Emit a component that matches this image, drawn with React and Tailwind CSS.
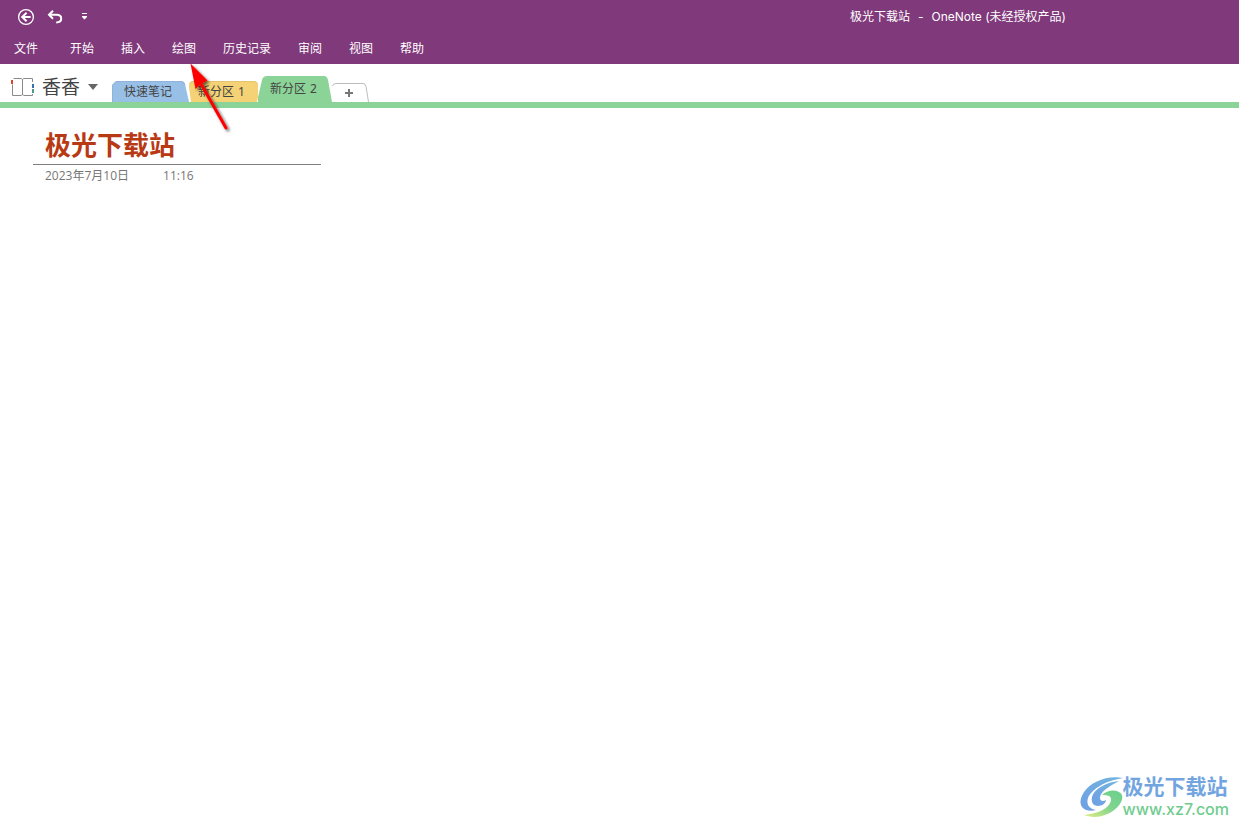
import React from "react";

const UI_FONT = "font-['Noto_Sans','Noto_Sans_CJK_SC',sans-serif]";

const MENU = ["开始", "插入", "绘图", "历史记录", "审阅", "视图", "帮助"];

function BackIcon() {
  return (
    <svg width="18" height="18" viewBox="0 0 18 18" fill="none" stroke="#fff" aria-hidden="true">
      <circle cx="9" cy="9" r="7.400" strokeWidth="1.300" />
      <path d="M13.600 9H5.500M9.600 4.800 5.200 9l4.400 4.200" strokeWidth="2" />
    </svg>
  );
}

function UndoIcon() {
  return (
    <svg width="16" height="14" viewBox="0 0 16 14" fill="none" stroke="#fff" aria-hidden="true">
      <path d="M6 .8 2 4.800l4 4" strokeWidth="2" />
      <path d="M2.200 4.800h7.300c3 0 4.700 1.400 4.700 3.600 0 2.400-2 3.900-5 4" strokeWidth="2" />
    </svg>
  );
}

function CustomizeIcon() {
  return (
    <svg width="7" height="7" viewBox="0 0 7 7" fill="#fff" aria-hidden="true">
      <path d="M1 0h5v1H1zM1 3h5v1L3.500 6.500 1 4z" />
    </svg>
  );
}

function NotebookIcon() {
  return (
    <svg width="24" height="20" viewBox="0 0 24 20" fill="none" aria-hidden="true">
      <path
        d="M1.500 7.500V18.500H9c1.500 0 2.500-.6 2.500-1 0 .4 1 1 2.500 1h7.500v-1.500M2.500 1.500H9c1.500 0 2.500.4 2.500 1.200 0-.8 1-1.200 2.500-1.200h7.500V5M11.500 2.500V18"
        stroke="#8a8a8a"
      />
      <path d="M0 3h2v4H0z" fill="#e0402f" />
      <path d="M21 7h2v4h-2z" fill="#3d6fb0" />
      <path d="M21 12h2v4h-2z" fill="#4a9c80" />
    </svg>
  );
}

function Header() {
  return (
    <header className="bg-[#80397b] text-xs text-white">
      <div className="flex h-[33px] items-center justify-between pl-[17px] pr-[173px]">
        <div className="flex items-center">
          <button aria-label="返回"><BackIcon /></button>
          <button aria-label="撤消" className="ml-3"><UndoIcon /></button>
          <button aria-label="自定义快速访问工具栏" className="ml-[18px]"><CustomizeIcon /></button>
        </div>
        <h1 className="flex gap-2 font-['Inter','Noto_Sans_CJK_SC',sans-serif]">
          <span>极光下载站</span>
          <span>-</span>
          <span>OneNote (未经授权产品)</span>
        </h1>
      </div>
      <nav className="flex h-[31px] items-center gap-[27px] pl-3.5">
        <button className="mr-[5px]">文件</button>
        {MENU.map((m) => (
          <button key={m}>{m}</button>
        ))}
      </nav>
    </header>
  );
}

function SectionTabs() {
  return (
    <div className="flex h-[38px] items-end">
      <button className="mb-[3px] ml-[11px] flex items-center self-end" aria-label="笔记本 香香">
        <NotebookIcon />
        <span className="ml-[7px] text-[19px] leading-6 text-[#444]">香香</span>
        <svg className="ml-2" width="10" height="6" viewBox="0 0 10 6" fill="#666" aria-hidden="true">
          <path d="M0 0h10L5 6z" />
        </svg>
      </button>
      <div className="ml-3.5 flex items-end text-xs text-[#444]" role="tablist">
        <button role="tab" aria-selected="false" className="relative h-[21px] w-[76px] pl-3 text-left">
          <svg className="absolute left-0 top-0" width="79" height="21" viewBox="0 0 79 21" aria-hidden="true">
            <path d="M0 21V4l4-4h65q3 0 4 3l4 18z" fill="#98bfe6" />
            <path d="M.5 21V4.200L4.200.5H69q3 0 3.700 3" fill="none" stroke="#8fb3dc" />
          </svg>
          <span className="relative">快速笔记</span>
        </button>
        <button role="tab" aria-selected="false" className="relative h-[21px] w-[70px] pl-2.5 text-left">
          <svg className="absolute left-0 top-0" width="71" height="21" viewBox="0 0 71 21" aria-hidden="true">
            <path d="M3 21 1 6q-.5-6 4-6h61q3 0 4 3v13l-1 5z" fill="#f4d275" />
            <path d="M2 3Q3 .5 5 .5h61q2 0 3 2" fill="none" stroke="#e3c570" />
          </svg>
          <span className="relative flex gap-1"><span>新分区</span><span>1</span></span>
        </button>
        <button role="tab" aria-selected="true" className="relative h-[26px] w-[74px] pl-3 text-left">
          <svg className="absolute left-0 top-0" width="75" height="26" viewBox="0 0 75 26" aria-hidden="true">
            <path d="M-1 26 4 4q1-4 5-4h57q3 0 4 4l4 22z" fill="#8bd397" />
          </svg>
          <span className="relative flex gap-1"><span>新分区</span><span>2</span></span>
        </button>
        <button aria-label="新建分区" className="relative h-[19px] w-[37px]">
          <svg width="37" height="19" viewBox="0 0 37 19" fill="none" aria-hidden="true">
            <path d="M.5 3Q1 .5 4 .5h27q2.500 0 3 3l2.500 15.500" stroke="#bdbdbd" />
            <path d="M13 10h8M17 6v8" stroke="#777" strokeWidth="2" />
          </svg>
        </button>
      </div>
    </div>
  );
}

function PointerArrow() {
  return (
    <svg className="pointer-events-none absolute left-[184px] top-[60px]" width="56" height="80" viewBox="0 0 56 80" aria-hidden="true">
      <defs>
        <filter id="arrow-shadow" x="-30%" y="-20%" width="170%" height="150%">
          <feDropShadow dx="2" dy="2" stdDeviation="1.700" floodColor="#000" floodOpacity="0.600" />
        </filter>
      </defs>
      <g filter="url(#arrow-shadow)" fill="#f00">
        <path d="M6.500 3.500 11.500 29 16 24.500 23.500 20.500z" />
        <path d="M16.500 23 42 68" stroke="#f00" strokeWidth="3" strokeLinecap="round" />
      </g>
    </svg>
  );
}

function Watermark() {
  return (
    <div className="flex items-center">
      <svg width="43" height="42" viewBox="0 0 43 42" aria-hidden="true">
        <defs>
          <linearGradient id="wm-blue" x1="0" y1="1" x2="1" y2="0">
            <stop offset="0" stopColor="#6f9fe4" />
            <stop offset="1" stopColor="#72b5df" />
          </linearGradient>
          <linearGradient id="wm-green" x1="0" y1="1" x2="1" y2="0">
            <stop offset="0" stopColor="#e2ee83" />
            <stop offset=".5" stopColor="#83d58d" />
            <stop offset="1" stopColor="#68cf8e" />
          </linearGradient>
        </defs>
        <path d="M43 2C27-1 11 6 4 16-1 24-1 31 6 34c3 1 7 1 10 0-7-1-10-6-8-12C11 14 24 5 43 2z" fill="url(#wm-blue)" />
        <path d="M39 5C26 6 14 13 12 21c-1 5 1 9 6 9 4 0 8-3 8-6-3 2-6 1-6-2 0-6 8-11 19-17z" fill="url(#wm-blue)" />
        <path d="M22 19c6-6 17-6 20 0 2 7-6 16-17 20-8 3-16 2-21 0 9-1 17-3 23-8 5-5 5-9 2-11-2-1-4-1-7-1z" fill="url(#wm-green)" />
      </svg>
      <div className="flex flex-col">
        <span className="font-['Liberation_Sans','Noto_Sans_CJK_SC',sans-serif] text-[21px] font-bold leading-6 text-[#72a5df]">极光下载站</span>
        <span className="font-['Inter',sans-serif] text-base font-medium leading-5 text-[#70cc8e]">www.xz7.com</span>
      </div>
    </div>
  );
}

export default function App() {
  return (
    <div className={`relative flex min-h-screen flex-col bg-white ${UI_FONT}`}>
      <Header />
      <SectionTabs />
      <div className="h-1.5 bg-[#8bd397]" />
      <main className="flex flex-1 flex-col">
        <article className="pl-[33px] pt-[18px]">
          <div className="w-72 border-b border-[#7f7f7f] pb-0.5 pl-3">
            <h2 className="font-['Noto_Sans_CJK_SC',sans-serif] text-[26px] font-bold leading-9 text-[#b83a14]">极光下载站</h2>
          </div>
          <div className="flex gap-[34px] pl-3 pt-0.5 font-['Open_Sans','Noto_Sans_CJK_SC',sans-serif] text-xs leading-[18px] text-[#767676]">
            <span>2023年7月10日</span>
            <span>11:16</span>
          </div>
        </article>
        <footer className="mt-auto flex justify-end pb-[7px] pr-2.5">
          <Watermark />
        </footer>
      </main>
      <PointerArrow />
    </div>
  );
}
